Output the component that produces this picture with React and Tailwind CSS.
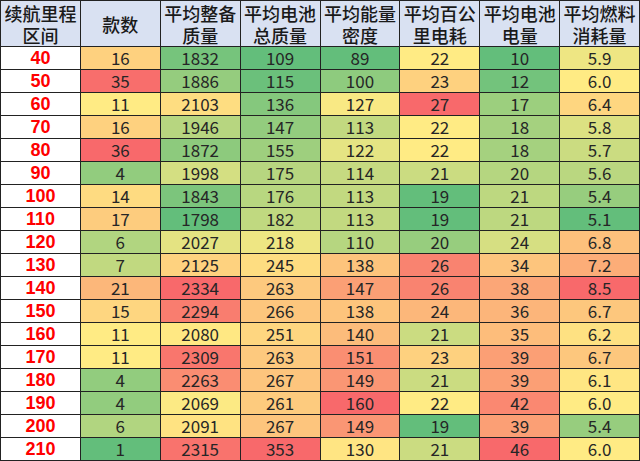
import React from "react";

const rows = [
  ["40", 16, 1832, 109, 89, 22, 10, "5.9"],
  ["50", 35, 1886, 115, 100, 23, 12, "6.0"],
  ["60", 11, 2103, 136, 127, 27, 17, "6.4"],
  ["70", 16, 1946, 147, 113, 22, 18, "5.8"],
  ["80", 36, 1872, 155, 122, 22, 18, "5.7"],
  ["90", 4, 1998, 175, 114, 21, 20, "5.6"],
  ["100", 14, 1843, 176, 113, 19, 21, "5.4"],
  ["110", 17, 1798, 182, 113, 19, 21, "5.1"],
  ["120", 6, 2027, 218, 110, 20, 24, "6.8"],
  ["130", 7, 2125, 245, 138, 26, 34, "7.2"],
  ["140", 21, 2334, 263, 147, 26, 38, "8.5"],
  ["150", 15, 2294, 266, 138, 24, 36, "6.7"],
  ["160", 11, 2080, 251, 140, 21, 35, "6.2"],
  ["170", 11, 2309, 263, 151, 23, 39, "6.7"],
  ["180", 4, 2263, 267, 149, 21, 39, "6.1"],
  ["190", 4, 2069, 261, 160, 22, 42, "6.0"],
  ["200", 6, 2091, 267, 149, 19, 39, "5.4"],
  ["210", 1, 2315, 353, 130, 21, 46, "6.0"],
];

const headers = [
  ["续航里程", "区间"],
  ["款数"],
  ["平均整备", "质量"],
  ["平均电池", "总质量"],
  ["平均能量", "密度"],
  ["平均百公", "里电耗"],
  ["平均电池", "电量"],
  ["平均燃料", "消耗量"],
];

const GREEN = [99, 190, 123];
const YELLOW = [255, 235, 132];
const RED = [248, 105, 107];

function mix(a, b, t) {
  return a.map((v, i) => Math.round(v + (b[i] - v) * t));
}

function stats(col) {
  const vals = rows.map((r) => Number(r[col])).sort((a, b) => a - b);
  const n = vals.length;
  const rank = 0.5 * (n - 1);
  const lo = Math.floor(rank);
  const mid = vals[lo] + (vals[lo + 1] - vals[lo]) * (rank - lo);
  return { min: vals[0], max: vals[n - 1], mid };
}

const colStats = [1, 2, 3, 4, 5, 6, 7].map((c) => stats(c));

function colorFor(col, value) {
  const { min, max, mid } = colStats[col - 1];
  const v = Number(value);
  let c;
  if (v <= mid) {
    const t = mid === min ? 1 : (v - min) / (mid - min);
    c = mix(GREEN, YELLOW, t);
  } else {
    const t = max === mid ? 0 : (v - mid) / (max - mid);
    c = mix(YELLOW, RED, t);
  }
  return `rgb(${c[0]}, ${c[1]}, ${c[2]})`;
}

export default function App() {
  return (
    <div
      className="w-[640px] h-[461px] overflow-hidden bg-white"
      style={{ fontFamily: '"Noto Sans CJK SC", "Noto Sans", sans-serif' }}
    >
      <div className="grid grid-cols-8 border-t border-l border-[#222]">
        {headers.map((h, i) => (
          <div
            key={i}
            className="h-[46px] bg-[#D9E1F2] border-r border-b border-[#222] flex flex-col items-center justify-center text-[18px] leading-[22px] font-medium text-[#1a1a1a]"
          >
            {h.map((line, j) => (
              <div key={j} className="h-[22px] leading-[22px]">
                {line}
              </div>
            ))}
          </div>
        ))}
        {rows.map((r, ri) => (
          <React.Fragment key={ri}>
            <div className="h-[23px] bg-white border-r border-b border-[#222] flex items-center justify-center text-[18px] leading-[22px] font-bold text-[#FF0000] font-['Liberation_Sans',sans-serif]">
              {r[0]}
            </div>
            {r.slice(1).map((v, ci) => (
              <div
                key={ci}
                className="h-[23px] border-r border-b border-[#222] flex items-center justify-center text-[17px] leading-[22px] text-[#262626]"
                style={{ backgroundColor: colorFor(ci + 1, v) }}
              >
                {v}
              </div>
            ))}
          </React.Fragment>
        ))}
      </div>
    </div>
  );
}
